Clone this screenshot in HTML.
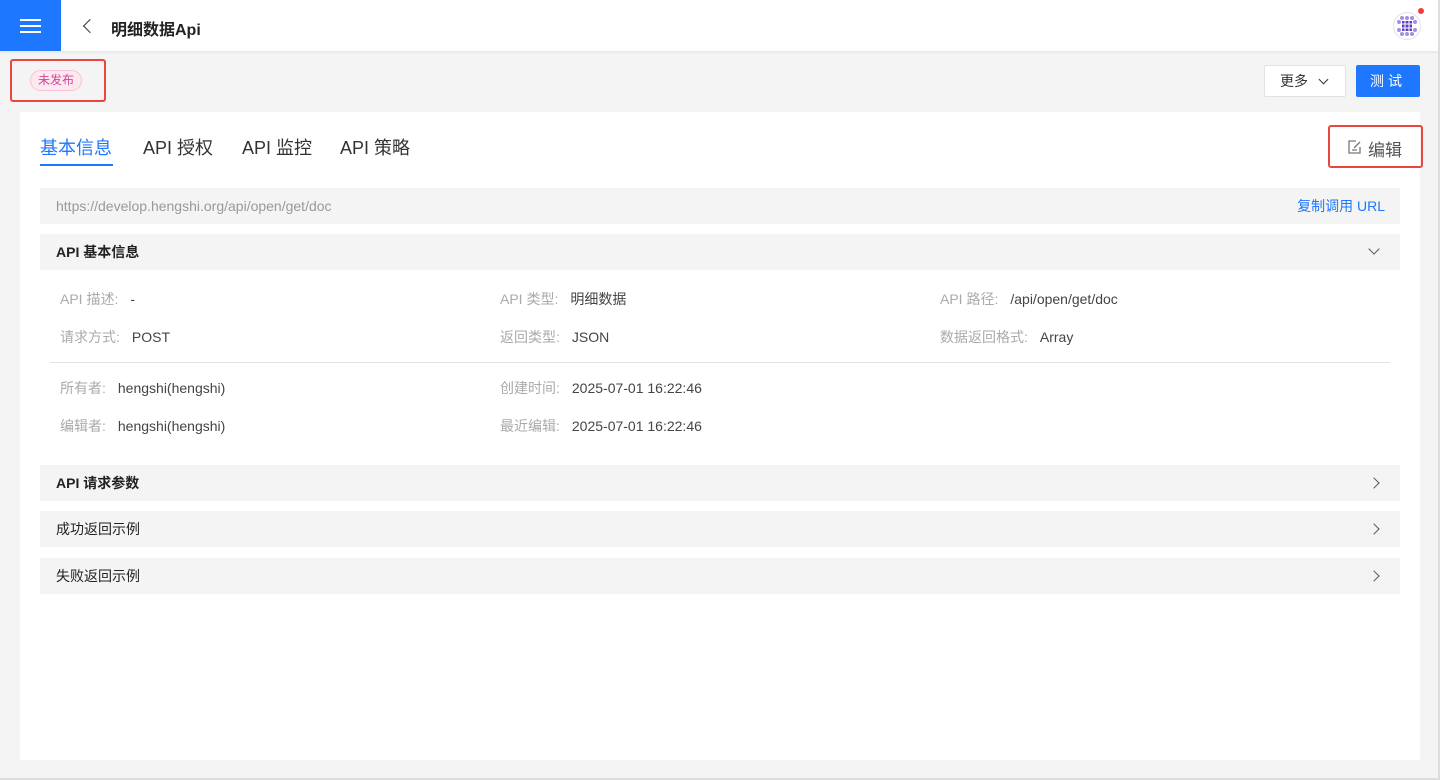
<!DOCTYPE html>
<html><head><meta charset="utf-8"><style>
*{box-sizing:border-box;margin:0;padding:0}
body{width:1440px;height:780px;background:#f4f4f4;font-family:"Liberation Sans","Noto Sans CJK SC",sans-serif;position:relative;overflow:hidden;color:#333}
.top{position:absolute;left:0;top:0;width:1440px;height:51px;background:#fff;box-shadow:0 1px 3px rgba(0,0,0,.08)}
.menu{position:absolute;left:0;top:0;width:61px;height:51px;background:#1e78ff}
.menu i{position:absolute;left:20px;width:21px;height:2px;background:#fff}
.abs{position:absolute}
.card{position:absolute;left:20px;top:112px;width:1400px;height:648px;background:#fff}
.bar{position:absolute;left:40px;width:1360px;height:36px;background:#f4f4f4;font-size:14px;line-height:36px}
.lbl{position:absolute;font-size:14px;color:#aaa;white-space:nowrap}
.lbl b{font-weight:normal;color:#444;margin-left:12px}
.chev{position:absolute;right:22px;top:14px;width:8px;height:8px;border-right:1.5px solid #555;border-bottom:1.5px solid #555}
</style></head><body>
<div class="top">
 <div class="menu"><i style="top:19px"></i><i style="top:25px"></i><i style="top:31px"></i></div>
 <div class="abs" style="left:85px;top:21px;width:10px;height:10px;border-left:1.8px solid #333;border-bottom:1.8px solid #333;transform:rotate(45deg)"></div>
 <div class="abs" style="left:111px;top:16px;font-size:16px;font-weight:bold;color:#222">明细数据Api</div>
 <div class="abs" style="left:1393px;top:12px;width:28px;height:28px;border-radius:50%;border:1px solid #e4e0f0;background:#fff"></div>
 <svg class="abs" style="left:1395px;top:14px" width="24" height="24" viewBox="0 0 24 24"><g fill="#a58ee0"><circle cx="7" cy="4" r="2"/><circle cx="12" cy="4" r="2"/><circle cx="17" cy="4" r="2"/><circle cx="4" cy="8" r="2"/><circle cx="20" cy="8" r="2"/><circle cx="4" cy="16" r="2"/><circle cx="20" cy="16" r="2"/><circle cx="7" cy="20" r="2"/><circle cx="12" cy="20" r="2"/><circle cx="17" cy="20" r="2"/></g><rect x="7" y="7" width="10" height="10" fill="#5b3fc0"/><path d="M10 7v10M14 7v10M7 10h10M7 14h10" stroke="#fff" stroke-width="1"/></svg>
 <div class="abs" style="left:1418px;top:8px;width:6px;height:6px;border-radius:50%;background:#f03c3c"></div>
</div>
<div class="abs" style="left:10px;top:59px;width:96px;height:43px;border:2px solid #e8473f;border-radius:3px"></div>
<div class="abs" style="left:30px;top:70px;width:52px;height:21px;border:1px solid #f8c3d8;background:#fde8f0;border-radius:11px;font-size:12px;color:#d0449a;text-align:center;line-height:19px">未发布</div>
<div class="abs" style="left:1264px;top:65px;width:82px;height:32px;background:#fff;border:1px solid #e2e2e2;border-radius:2px;font-size:14px;line-height:30px;padding-left:15px">更多<span style="position:absolute;left:55px;top:10px;width:7px;height:7px;border-right:1.5px solid #333;border-bottom:1.5px solid #333;transform:rotate(45deg)"></span></div>
<div class="abs" style="left:1356px;top:65px;width:64px;height:32px;background:#1e78ff;border-radius:2px;color:#fff;font-size:14px;text-align:center;line-height:32px;letter-spacing:4px">测试</div>
<div class="card"></div>
<div class="abs" style="left:40px;top:134px;font-size:18px;color:#1e78ff">基本信息</div>
<div class="abs" style="left:40px;top:164px;width:73px;height:2px;background:#1e78ff"></div>
<div class="abs" style="left:143px;top:134px;font-size:18px;color:#333">API 授权</div>
<div class="abs" style="left:242px;top:134px;font-size:18px;color:#333">API 监控</div>
<div class="abs" style="left:340px;top:134px;font-size:18px;color:#333">API 策略</div>
<div class="abs" style="left:1328px;top:125px;width:95px;height:43px;border:2px solid #e8473f;border-radius:3px"></div>
<svg class="abs" style="left:1347px;top:139px" width="16" height="16" viewBox="0 0 16 16" fill="none" stroke="#777" stroke-width="1.3"><path d="M9 2H2v12h11V8"/><path d="M5 11h5M7 9l6-6"/></svg>
<div class="abs" style="left:1368px;top:136px;font-size:17px;color:#555">编辑</div>
<div class="bar" style="top:188px;padding-left:16px;color:#999">https://develop.hengshi.org/api/open/get/doc<span style="position:absolute;right:15px;color:#1e78ff">复制调用 URL</span></div>
<div class="bar" style="top:234px;padding-left:16px;color:#222;font-weight:bold">API 基本信息<span class="chev" style="transform:rotate(45deg);top:11px"></span></div>
<div class="lbl" style="left:60px;top:289px">API 描述:<b>-</b></div>
<div class="lbl" style="left:500px;top:289px">API 类型:<b>明细数据</b></div>
<div class="lbl" style="left:940px;top:289px">API 路径:<b>/api/open/get/doc</b></div>
<div class="lbl" style="left:60px;top:327px">请求方式:<b>POST</b></div>
<div class="lbl" style="left:500px;top:327px">返回类型:<b>JSON</b></div>
<div class="lbl" style="left:940px;top:327px">数据返回格式:<b>Array</b></div>
<div class="abs" style="left:50px;top:362px;width:1340px;height:1px;background:#e2e2e2"></div>
<div class="lbl" style="left:60px;top:378px">所有者:<b>hengshi(hengshi)</b></div>
<div class="lbl" style="left:500px;top:378px">创建时间:<b>2025-07-01 16:22:46</b></div>
<div class="lbl" style="left:60px;top:416px">编辑者:<b>hengshi(hengshi)</b></div>
<div class="lbl" style="left:500px;top:416px">最近编辑:<b>2025-07-01 16:22:46</b></div>
<div class="bar" style="top:465px;padding-left:16px;color:#222;font-weight:bold">API 请求参数<span class="chev" style="transform:rotate(-45deg)"></span></div>
<div class="bar" style="top:511px;padding-left:16px;color:#222">成功返回示例<span class="chev" style="transform:rotate(-45deg)"></span></div>
<div class="bar" style="top:558px;padding-left:16px;color:#222">失败返回示例<span class="chev" style="transform:rotate(-45deg)"></span></div>
<div class="abs" style="left:1438px;top:0;width:2px;height:780px;background:#ddd"></div>
<div class="abs" style="left:0;top:778px;width:1440px;height:2px;background:#ddd"></div>
</body></html>
